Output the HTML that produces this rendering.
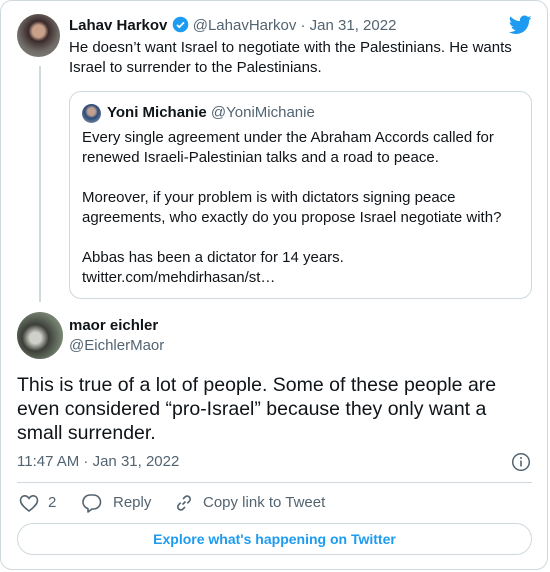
<!DOCTYPE html>
<html><head><style>
body{margin:0;background:#fff;font-family:"Liberation Sans",Arial,sans-serif;width:550px;height:572px;overflow:hidden;position:relative;color:#0f1419}
.card{position:absolute;left:0;top:0;width:548px;height:570px;border:1px solid #cfd9de;border-radius:12px;box-sizing:border-box}
.a{position:absolute}
.t{font-size:15px;line-height:20px}
.g{color:#536471}
</style></head><body>
<div class="card"></div>
<div class="a" style="left:17px;top:14px;width:43px;height:43px;border-radius:50%;background:radial-gradient(circle at 50% 40%,#c9a08a 0 18%,#3a2a2a 30%,#6f6a66 60%,#8a8a80)"></div>
<div class="a" style="left:39px;top:66px;width:2px;height:236px;background:#cfd9de"></div>
<div class="a t" style="left:69px;top:16px;white-space:nowrap"><b>Lahav Harkov</b> <svg width="17" height="17" viewBox="0 0 24 24" style="vertical-align:-3px"><circle cx="12" cy="12" r="11" fill="#1d9bf0"/><path d="M7 12.5l3.2 3.2L17 9" stroke="#fff" stroke-width="2.4" fill="none"/></svg> <span class="g">@LahavHarkov · Jan 31, 2022</span></div>
<svg class="a" style="left:509px;top:15px" width="23" height="20" viewBox="0 0 24 20"><path fill="#1d9bf0" d="M23.6 2.4c-.9.4-1.8.6-2.8.8 1-.6 1.8-1.6 2.1-2.7-.9.6-2 1-3.1 1.2C18.9.7 17.600.1 16.2.1c-2.7 0-4.8 2.2-4.8 4.8 0 .4 0 .8.1 1.1C7.5 5.8 3.9 3.9 1.5 1 1.1 1.7.8 2.6.8 3.5c0 1.7.9 3.2 2.2 4-.8 0-1.5-.2-2.2-.6v.1c0 2.3 1.7 4.3 3.900 4.7-.4.1-.8.2-1.3.2-.3 0-.6 0-.9-.1.6 1.900 2.4 3.3 4.5 3.4-1.7 1.3-3.7 2.1-6 2.1-.4 0-.8 0-1.2-.1 2.1 1.4 4.7 2.2 7.4 2.2 8.9 0 13.7-7.4 13.7-13.7v-.6c1-.7 1.8-1.5 2.4-2.5z"/></svg>
<div class="a t" style="left:69px;top:38px;width:460px">He doesn’t want Israel to negotiate with the Palestinians. He wants Israel to surrender to the Palestinians.</div>
<div class="a" style="left:69px;top:91px;width:463px;height:208px;border:1px solid #cfd9de;border-radius:12px;box-sizing:border-box"></div>
<div class="a" style="left:82px;top:104px;width:19px;height:19px;border-radius:50%;background:radial-gradient(circle at 50% 40%,#c0a090 0 25%,#2b4a7a 45%,#9aa)"></div>
<div class="a t" style="left:107px;top:103px;white-space:nowrap"><b>Yoni Michanie</b> <span class="g">@YoniMichanie</span></div>
<div class="a t" style="left:82px;top:128px;width:440px">Every single agreement under the Abraham Accords called for renewed Israeli-Palestinian talks and a road to peace.<br><br>Moreover, if your problem is with dictators signing peace agreements, who exactly do you propose Israel negotiate with?<br><br>Abbas has been a dictator for 14 years.<br>twitter.com/mehdirhasan/st…</div>
<div class="a" style="left:17px;top:312px;width:46px;height:47px;border-radius:50%;background:radial-gradient(circle at 40% 55%,#cfd0c8 0 15%,#3c3f38 35%,#6e7a6a 65%,#a0a890)"></div>
<div class="a t" style="left:69px;top:316px"><b>maor eichler</b></div>
<div class="a t g" style="left:69px;top:336px">@EichlerMaor</div>
<div class="a" style="left:17px;top:373px;width:515px;font-size:19.5px;line-height:24px">This is true of a lot of people. Some of these people are even considered “pro-Israel” because they only want a small surrender.</div>
<div class="a g" style="left:17px;top:452px;font-size:15px;line-height:20px">11:47 AM · Jan 31, 2022</div>
<svg class="a" style="left:511px;top:452px" width="20" height="20" viewBox="0 0 20 20"><circle cx="10" cy="10" r="8.3" fill="none" stroke="#536471" stroke-width="1.5"/><rect x="9.2" y="8.5" width="1.6" height="6" fill="#536471"/><circle cx="10" cy="6" r="1" fill="#536471"/></svg>
<div class="a" style="left:17px;top:482px;width:515px;height:1px;background:#cfd9de"></div>
<svg class="a" style="left:19px;top:494px" width="20" height="19" viewBox="0 0 20 19"><path d="M10 17C4 12.5 1.5 9.5 1.5 6.2 1.5 3.6 3.4 1.8 5.7 1.8c1.8 0 3.2 1 4.3 2.6 1.1-1.6 2.5-2.6 4.3-2.6 2.3 0 4.2 1.8 4.2 4.4 0 3.3-2.5 6.3-8.5 10.8z" fill="none" stroke="#536471" stroke-width="1.6"/></svg>
<div class="a g t" style="left:48px;top:493px">2</div>
<svg class="a" style="left:81px;top:493px" width="21" height="20" viewBox="0 0 21 20"><path d="M8.5 2h4a7 7 0 010 14h-1.5l-4 3v-3.3A7 7 0 018.5 2z" fill="none" stroke="#536471" stroke-width="1.6" stroke-linejoin="round"/></svg>
<div class="a g t" style="left:113px;top:493px">Reply</div>
<svg class="a" style="left:174px;top:493px" width="20" height="20" viewBox="0 0 20 20"><g fill="none" stroke="#536471" stroke-width="1.6"><path d="M8.5 11.5l3-3"/><path d="M9 6l2-2a3 3 0 014.3 4.3l-2 2"/><path d="M11 14l-2 2a3 3 0 01-4.3-4.3l2-2"/></g></svg>
<div class="a g t" style="left:203px;top:493px">Copy link to Tweet</div>
<div class="a" style="left:17px;top:523px;width:515px;height:32px;border:1px solid #cfd9de;border-radius:16px;box-sizing:border-box;text-align:center;line-height:30px;font-size:14px;font-weight:bold;color:#1d9bf0">Explore what's happening on Twitter</div>
</body></html>
